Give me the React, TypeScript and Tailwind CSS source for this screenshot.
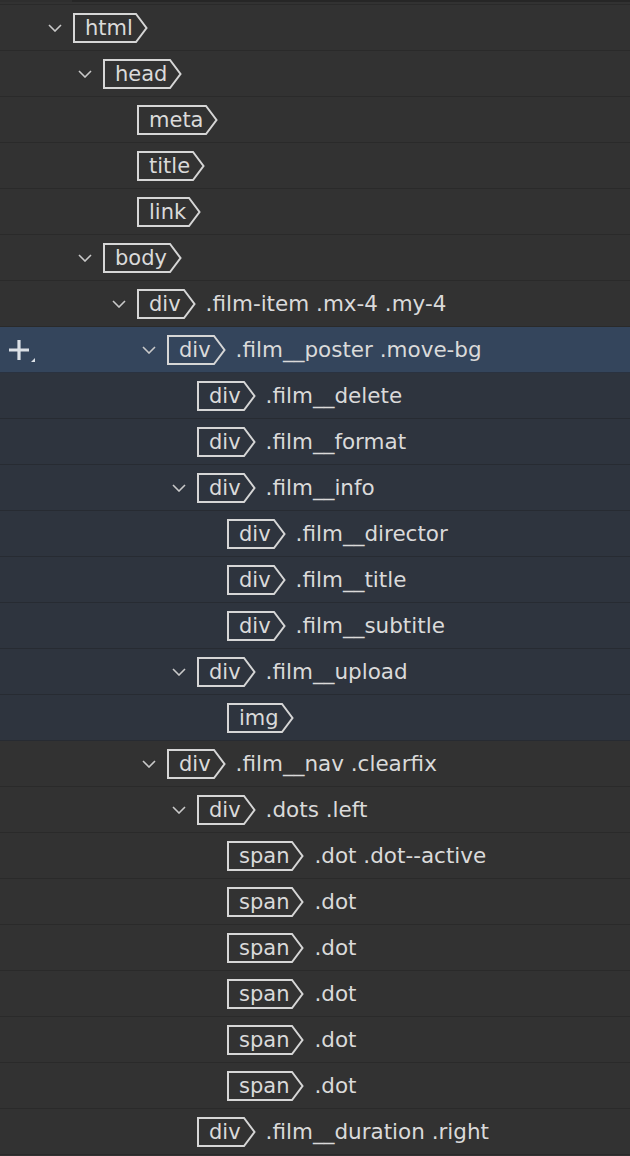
import React from "react";

type Row = { level: number; tag: string; cls?: string; chevron?: boolean; state?: "sel" | "child" };

const rows: Row[] = [
  { level: 0, tag: "html", chevron: true },
  { level: 1, tag: "head", chevron: true },
  { level: 2, tag: "meta" },
  { level: 2, tag: "title" },
  { level: 2, tag: "link" },
  { level: 1, tag: "body", chevron: true },
  { level: 2, tag: "div", cls: ".film-item .mx-4 .my-4", chevron: true },
  { level: 3, tag: "div", cls: ".film__poster .move-bg", chevron: true, state: "sel" },
  { level: 4, tag: "div", cls: ".film__delete", state: "child" },
  { level: 4, tag: "div", cls: ".film__format", state: "child" },
  { level: 4, tag: "div", cls: ".film__info", chevron: true, state: "child" },
  { level: 5, tag: "div", cls: ".film__director", state: "child" },
  { level: 5, tag: "div", cls: ".film__title", state: "child" },
  { level: 5, tag: "div", cls: ".film__subtitle", state: "child" },
  { level: 4, tag: "div", cls: ".film__upload", chevron: true, state: "child" },
  { level: 5, tag: "img", state: "child" },
  { level: 3, tag: "div", cls: ".film__nav .clearfix", chevron: true },
  { level: 4, tag: "div", cls: ".dots .left", chevron: true },
  { level: 5, tag: "span", cls: ".dot .dot--active" },
  { level: 5, tag: "span", cls: ".dot" },
  { level: 5, tag: "span", cls: ".dot" },
  { level: 5, tag: "span", cls: ".dot" },
  { level: 5, tag: "span", cls: ".dot" },
  { level: 5, tag: "span", cls: ".dot" },
  { level: 4, tag: "div", cls: ".film__duration .right" },
];

const boxLeft = (level: number) => 73 + 30 * level + (level >= 2 ? 4 : 0);

function Chevron() {
  return (
    <svg width="14" height="8" viewBox="0 0 14 8" className="block">
      <path d="M1 1 L7 7 L13 1" fill="none" stroke="#c9c9c9" strokeWidth="1.6" />
    </svg>
  );
}

function Tag({ name }: { name: string }) {
  return (
    <div className="flex items-stretch h-[30px]">
      <div className="flex items-center border-l-2 border-y-2 border-[#d6d6d6] pl-[10px] pr-[2px] pt-[1px] leading-none">
        {name}
      </div>
      <svg width="13" height="30" viewBox="0 0 13 30" className="block shrink-0">
        <path d="M0 1 L1 1 L11.5 15 L1 29 L0 29" fill="none" stroke="#d6d6d6" strokeWidth="2" />
      </svg>
    </div>
  );
}

function PlusIcon() {
  return (
    <svg width="34" height="26" viewBox="0 0 34 26" className="block">
      <path d="M16 2 V22 M6 12 H26" stroke="#dbe0e6" strokeWidth="3.2" />
      <path d="M28 24 L32 20 V24 Z" fill="#dbe0e6" />
    </svg>
  );
}

export default function App() {
  return (
    <div
      className="w-[630px] h-[1156px] bg-[#323232] text-[#dadada] text-[21px] overflow-hidden"
      style={{ fontFamily: '"DejaVu Sans", "Liberation Sans", sans-serif' }}
    >
      <div className="h-[5px] border-b border-[#2a2a2a] flex">
        <div className="w-[72px] h-[2px] bg-[#2e2e2e]" />
        <div className="flex-1 h-[2px] bg-[#262626]" />
      </div>
      {rows.map((r, i) => {
        const bg =
          r.state === "sel"
            ? "bg-[#34455c] border-[#2a3240]"
            : r.state === "child"
            ? "bg-[#2e343e] border-[#272b32]"
            : "bg-[#323232] border-[#2a2a2a]";
        const left = boxLeft(r.level);
        return (
          <div key={i} className={`h-[46px] border-b flex items-center ${bg}`}>
            <div className="w-0 h-full flex items-center">
              {r.state === "sel" && (
                <div className="ml-[3px] mt-[2px]">
                  <PlusIcon />
                </div>
              )}
            </div>
            <div className="flex items-center" style={{ paddingLeft: left - 25 }}>
              <div className="w-[25px] flex items-center">
                {r.chevron && <Chevron />}
              </div>
              <Tag name={r.tag} />
              {r.cls && (
                <span className="ml-[10px] whitespace-nowrap text-[21.5px] pt-[2px]">
                  {r.cls}
                </span>
              )}
            </div>
          </div>
        );
      })}
    </div>
  );
}
